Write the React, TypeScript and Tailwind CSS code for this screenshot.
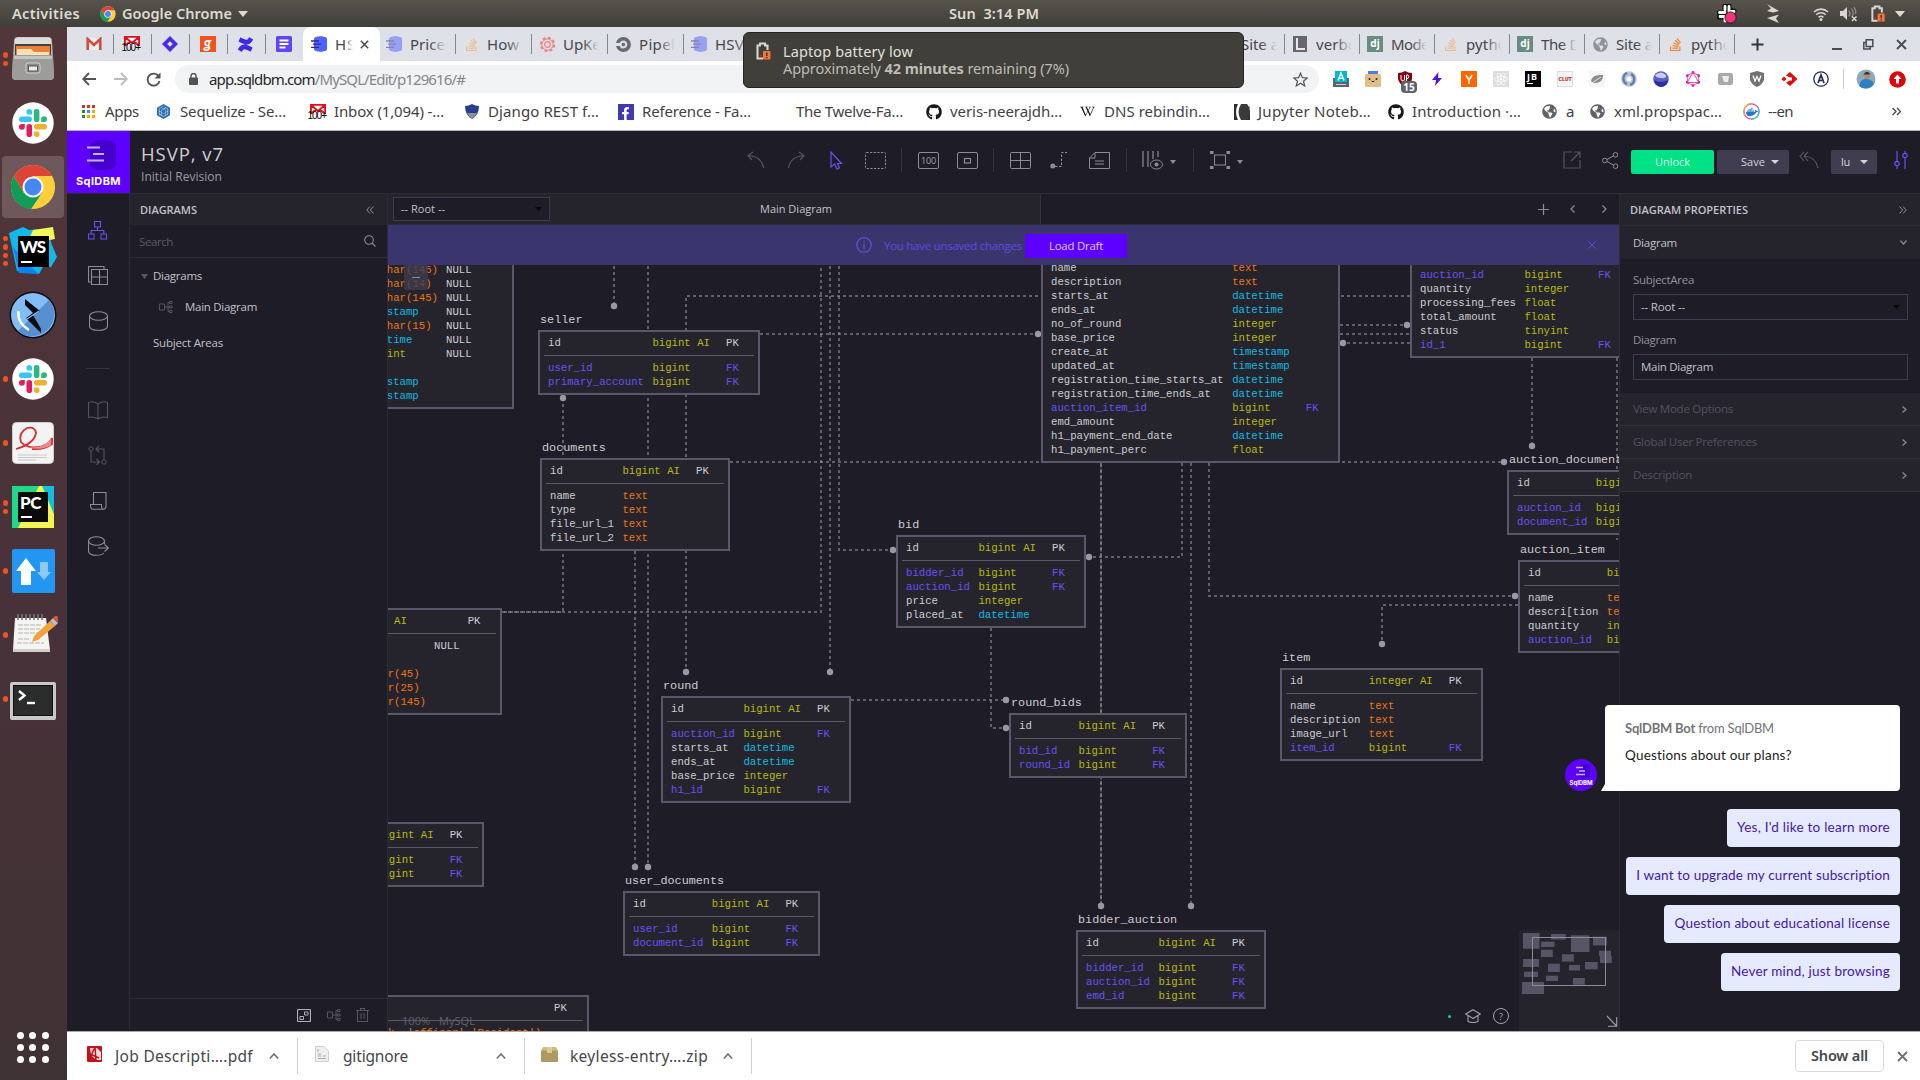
import React, { useLayoutEffect, useRef } from "react";
import { FaGithub, FaWikipediaW, FaStackOverflow, FaConfluence, FaReact, FaDocker, FaFacebookF, FaGlobeAmericas } from "react-icons/fa";
import { SiGraphql, SiCircleci, SiSequelize } from "react-icons/si";

const UI = "font-['Open_Sans','Noto_Sans',sans-serif]";
const SYS = "font-['Noto_Sans','Open_Sans',sans-serif]";

/* Text spaced out so that it fills exactly the width it is given. */
function Fit({ w, className = "", children }: { w: number; className?: string; children: React.ReactNode }) {
  const ref = useRef<HTMLSpanElement>(null);
  useLayoutEffect(() => {
    const el = ref.current;
    if (!el) return;
    el.style.letterSpacing = "0px";
    const n = (el.textContent || "").length;
    el.style.letterSpacing = `${(w - el.getBoundingClientRect().width) / n}px`;
  });
  return (
    <span ref={ref} className={`inline-block shrink-0 whitespace-pre ${className}`}>
      {children}
    </span>
  );
}

type SvgProps = { w: number; h: number; className?: string; children: React.ReactNode; vb?: string };
const Svg = ({ w, h, className = "", children, vb }: SvgProps) => (
  <svg width={w} height={h} viewBox={vb || `0 0 ${w} ${h}`} fill="none" className={`shrink-0 ${className}`}>
    {children}
  </svg>
);

/* ---------- logos ---------- */

const Chrome = ({ s }: { s: number }) => (
  <Svg w={s} h={s} vb="0 0 48 48">
    <circle cx="24" cy="24" r="23" fill="#fdd03b" />
    <path d="M4.1 12.5 A23 23 0 0 0 22 47 L33.5 30 L24 24 L14.5 30.5 Z" fill="#119c58" />
    <path d="M24 12.5 H43.9 A23 23 0 0 0 4.1 12.5 L14 29.5 Z" fill="#dd4437" />
    <circle cx="24" cy="24" r="11" fill="#f4f4f4" />
    <circle cx="24" cy="24" r="8.8" fill="#4587f3" />
  </Svg>
);

const Slack = ({ s }: { s: number }) => (
  <Svg w={s} h={s} vb="0 0 42 42">
    <circle cx="21" cy="21" r="20.7" fill="#fff" />
    <rect x="7" y="14.5" width="13" height="5.6" rx="2.8" fill="#36c5f0" />
    <path d="M20 12.6 h-3 a2.8 2.8 0 1 1 3 -2.8 z" fill="#36c5f0" />
    <rect x="21.8" y="7" width="5.6" height="13" rx="2.8" fill="#2eb67d" />
    <path d="M29.2 20 v-3 a2.9 2.9 0 1 1 2.8 3 z" fill="#2eb67d" />
    <rect x="22" y="22" width="13" height="5.6" rx="2.8" fill="#ecb22e" />
    <path d="M22 29.4 h3 a2.8 2.8 0 1 1 -3 2.8 z" fill="#ecb22e" />
    <rect x="14.5" y="22" width="5.6" height="13" rx="2.8" fill="#e01e5a" />
    <path d="M12.8 22 v3 a2.9 2.9 0 1 1 -2.8 -3 z" fill="#e01e5a" />
  </Svg>
);

const Gmail = () => (
  <Svg w={16} h={14}>
    <rect x="1" y="1" width="14" height="12" fill="#eee" />
    <path d="M1.7 13 V2 L8 8 L14.3 2 V13" stroke="#d54b3d" strokeWidth="2.6" />
  </Svg>
);
const Gmail100 = () => (
  <div className="relative h-4 w-4">
    <Svg w={16} h={10}>
      <rect width="16" height="10" fill="#fff" />
      <path d="M0.9 10 V0.9 H15.1 V10 M1 1 L8 7 L15 1 M1.5 9.5 L6 5.5 M14.5 9.5 L10 5.5" stroke="#e00f1b" strokeWidth="1.9" />
    </Svg>
    <span className="absolute -left-[2px] top-[7px] font-['Liberation_Sans'] text-[10px] leading-[10px] tracking-[-1px] text-black">100+</span>
  </div>
);
const Db = ({ faded = false }: { faded?: boolean }) => (
  <Svg w={16} h={16} className={faded ? "opacity-50" : ""}>
    <path d="M3 3 C3 -0.6 16 -0.6 16 3 V13 C16 16.6 3 16.6 3 13 Z" fill="#4f62fb" />
    <path d="M0 5 h8 M2 8.2 h8 M0 11.4 h8" stroke="#2e2a8c" strokeWidth="1.3" />
  </Svg>
);
const Dj = () => (
  <div className="flex h-4 w-4 items-center justify-center bg-[#678c80] pb-0.5 font-['Noto_Sans'] text-[10px] font-bold leading-none text-white">dj</div>
);
const Globe = ({ c = "#5f6368" }: { c?: string }) => <FaGlobeAmericas size={15} color={c} className="shrink-0" />;

const favicons: Record<string, React.ReactNode> = {
  gmail: <Gmail />,
  gmail100: <Gmail100 />,
  jira: (
    <Svg w={16} h={16}>
      <path d="M8 0 L16 8 L8 16 L0 8 Z" fill="#4b2be8" />
      <path d="M8 5.2 L10.8 8 L8 10.8 L5.2 8 Z" fill="#dfe1e8" />
    </Svg>
  ),
  g: <div className="flex h-4 w-4 items-center justify-center bg-[#f4511e] pb-1 font-['Lato'] text-[15px] font-black italic leading-none text-white">g</div>,
  confluence: <FaConfluence size={15} color="#4326e6" />,
  docs: (
    <Svg w={16} h={16}>
      <rect width="16" height="16" rx="1.5" fill="#6246f5" />
      <path d="M3.5 4.5 h9 M3.5 8 h9 M3.5 11.5 h6" stroke="#fff" strokeWidth="1.8" />
    </Svg>
  ),
  dbf: <Db faded />,
  so: <FaStackOverflow size={15} color="#f48024" />,
  sof: <FaStackOverflow size={15} color="#f0b98c" />,
  gear: (
    <Svg w={17} h={17}>
      <circle cx="8.5" cy="8.5" r="6.6" stroke="#f08080" strokeWidth="2.2" strokeDasharray="3 2.2" />
      <circle cx="8.5" cy="8.5" r="5.6" stroke="#f08080" strokeWidth="1" />
      <circle cx="8.5" cy="8.5" r="2.8" stroke="#f08080" strokeWidth="1.2" />
    </Svg>
  ),
  circle: <SiCircleci size={15} color="#6b6b6e" />,
  l: (
    <Svg w={14} h={16}>
      <rect width="14" height="16" fill="#67666c" />
      <path d="M4 2 V13 H12" stroke="#e8e8ea" strokeWidth="2" />
    </Svg>
  ),
  dj: <Dj />,
  globe: <Globe c="#909299" />,
};

/* ---------- desktop bar and dock ---------- */

const Battery = ({ s = 1 }: { s?: number }) => (
  <Svg w={17 * s} h={18 * s} vb="0 0 17 18">
    <path d="M8 16.500 H2.500 V3.500 H5 V1.500 H10 V3.500 H12.500 V8" stroke="#d8d6cf" strokeWidth="2.100" />
    <rect x="8" y="9" width="7.500" height="8.500" rx="1" fill="#f0763b" />
    <path d="M11.800 10.500 V14 M11.800 15 V16.300" stroke="#503020" strokeWidth="1.500" />
    <circle cx="5.800" cy="13.500" r="1" fill="#e02020" />
  </Svg>
);

function TopBar() {
  return (
    <div className={`flex h-[27px] w-full shrink-0 items-center bg-gradient-to-b from-[#57544b] to-[#3f3e39] text-[14.5px] font-semibold text-[#dfdbd2] ${SYS}`}>
      <Fit w={68} className="ml-3">Activities</Fit>
      <div className="ml-5 flex w-5 items-center"><Chrome s={16} /></div>
      <Fit w={110} className="ml-[2px]">Google Chrome</Fit>
      <Svg w={10} h={6} className="ml-1.5"><path d="M0 0 H10 L5 6 Z" fill="#dfdbd2" /></Svg>
      <Fit w={90} className="ml-[701px]">Sun  3:14 PM</Fit>
      <div className="ml-auto flex w-[203px] items-center">
        <div className="h-5 w-5">
          <Svg w={20} h={20}>
            <path d="M2 9 H9 M2 13 H8 M8 2 V7 M12 2 V9 M12 7 H17" stroke="#111" strokeWidth="5" strokeLinecap="round" />
            <path d="M2.500 8.500 H8 M3 12.500 H7 M8 2.500 V6 M12 2.500 V8.500 M14.500 7.500 H17 M8 13 V17" stroke="#fff" strokeWidth="2.8" strokeLinecap="round" />
            <circle cx="13.5" cy="13.5" r="5.6" fill="#f5337d" stroke="#111" strokeWidth="0.800" />
          </Svg>
        </div>
        <Svg w={14} h={20} className="ml-[29px]"><path d="M1 0 L13 7 L7 8.5 L1 7 L5 4.5 Z M1 14 L13 10.5 L10 14.5 L13 19 Z" fill="#d8d6cf" /></Svg>
        <Svg w={16} h={14} className="ml-[33px]">
          <path d="M1 5 A10 10 0 0 1 15 5 M3.3 7.8 A6.5 6.5 0 0 1 12.7 7.8 M5.6 10.4 A3.4 3.4 0 0 1 10.4 10.4" stroke="#d8d6cf" strokeWidth="1.6" />
          <circle cx="8" cy="12.4" r="1.5" fill="#d8d6cf" />
        </Svg>
        <Svg w={18} h={16} className="ml-[11px]">
          <path d="M0 5 H3 L7 1 V14 L3 10 H0 Z" fill="#d8d6cf" />
          <path d="M9 4.5 Q11 7.5 9 10.5 M11.5 2.5 Q14.5 7 12 11 M14 1 Q16.5 5 15.5 8" stroke="#8f8d86" strokeWidth="1.3" />
          <path d="M12 10.5 L16.5 15 M16.5 10.5 L12 15" stroke="#d8d6cf" strokeWidth="1.5" />
        </Svg>
        <div className="ml-[12px]"><Battery s={0.95} /></div>
        <Svg w={10} h={6} className="ml-[9px]"><path d="M0 0 H10 L5 6 Z" fill="#dfdbd2" /></Svg>
      </div>
    </div>
  );
}

const dockItems: { dots: number; active?: boolean; icon: React.ReactNode }[] = [
  {
    dots: 2,
    icon: (
      <Svg w={44} h={46}>
        <path d="M3 5 Q3 1 7 1 H37 Q41 1 41 5 L43 40 Q43 44 39 44 H5 Q1 44 1 40 Z" fill="#b9b9b7" />
        <path d="M4 4 Q4 1.5 7 1.5 H37 Q40 1.5 40 4 V9 H4 Z" fill="#dcdcda" />
        <rect x="4" y="8" width="36" height="12" fill="#4b4038" />
        <path d="M5 10 H39 V20 H5 Z" fill="#e8823a" />
        <path d="M6 13 H20 L23 16 H38 V20 H6 Z" fill="#f7e2b8" />
        <path d="M2 19 H42 L43 41 Q42 44 39 44 H5 Q2 44 1 41 Z" fill="#9c9c9a" />
        <path d="M3 20 H41 V23 H3 Z" fill="#c4c4c2" />
        <rect x="15" y="27" width="14" height="10" rx="2" fill="#8a8a88" stroke="#d2d2d0" />
        <rect x="17.5" y="30" width="9" height="5" fill="#ececec" stroke="#555" />
      </Svg>
    ),
  },
  { dots: 0, icon: <Slack s={42} /> },
  { dots: 1, active: true, icon: <Chrome s={46} /> },
  {
    dots: 4,
    icon: (
      <div className="relative h-12 w-12">
        <Svg w={48} h={48}>
          <path d="M0 6 L14 0 L20 3 L34 2 L40 8 L43 18 L48 30 L42 40 L34 40 L30 47 L8 44 Z" fill="#11b8ea" />
          <path d="M24 3 L44 0 L46 12 L36 14 L20 12 Z" fill="#f4f65a" />
          <path d="M4 20 L10 46 L30 47 L22 40 Z" fill="#0a84f5" />
        </Svg>
        <div className="absolute left-[9px] top-[9px] flex h-[31px] w-[31px] flex-col bg-black">
          <span className="pl-[2px] pt-[2px] font-['Lato'] text-[17px] font-black leading-[18px] tracking-[-1px] text-white">WS</span>
          <div className="ml-[3px] mt-[5px] h-[2px] w-[11px] bg-white" />
        </div>
      </div>
    ),
  },
  {
    dots: 0,
    icon: (
      <Svg w={48} h={48}>
        <circle cx="24" cy="24" r="23.5" fill="#0c0c10" />
        <circle cx="24" cy="24" r="22" fill="#82bdf8" />
        <path d="M40 9 A22 22 0 0 1 9 40 Z" fill="#5690d0" />
        <path d="M16 8 L31 20 L24 24 L32 38 V42 L17 27 L24 22 L16 14 Z" fill="#0c0c10" />
        <path d="M18 28 L30 20" stroke="#82bdf8" strokeWidth="1.2" />
        <path d="M9.5 20 Q8 32 20 39" stroke="#fff" strokeWidth="2.4" />
      </Svg>
    ),
  },
  { dots: 1, icon: <Slack s={42} /> },
  {
    dots: 1,
    icon: (
      <Svg w={42} h={42}>
        <rect x="0.5" y="0.5" width="41" height="41" rx="4" fill="#f3f3f3" stroke="#cfcfcf" />
        <path d="M4 27 Q22 22 24 11 Q23 4 15 6 Q6 11 9 20 Q15 27 28 25 Q38 22 40 16 V22 Q32 28 20 27" stroke="#d52f33" strokeWidth="1.8" />
        <path d="M16 25.5 Q34 26 39 16 V23 Q30 29 16 25.5 Z" fill="#f08a88" />
        <path d="M6 33 H35 M6 35.5 H35 M6 38 H24" stroke="#c9c9c9" />
      </Svg>
    ),
  },
  {
    dots: 2,
    icon: (
      <div className="relative h-[42px] w-[42px]">
        <Svg w={42} h={42}>
          <rect width="42" height="42" fill="#21d789" />
          <path d="M0 42 L12 34 L24 0 H30 L42 28 V42 Z" fill="#f5f550" />
          <path d="M0 0 H27 L6 42 H0 Z" fill="#21d789" />
          <path d="M31 0 H42 V28 Z" fill="#12bfe0" />
        </Svg>
        <div className="absolute left-[6px] top-[6px] flex h-[30px] w-[30px] flex-col bg-[#0b0b0b]">
          <span className="pl-[2px] pt-[2px] font-['Lato'] text-[17px] font-black leading-[17px] tracking-[-0.5px] text-white">PC</span>
          <div className="ml-[3px] mt-[5px] h-[2px] w-[11px] bg-white" />
        </div>
      </div>
    ),
  },
  {
    dots: 1,
    icon: (
      <Svg w={43} h={44}>
        <rect width="43" height="44" rx="2" fill="#2196f3" />
        <path d="M14 9 L24 22 H19 V36 H9 V22 H4 Z" fill="#fff" />
        <path d="M32 31 L25 23 H28 V13 H36 V23 H39 Z" fill="#8fc8f9" />
      </Svg>
    ),
  },
  {
    dots: 1,
    icon: (
      <Svg w={46} h={40} className="-mt-1 ml-1">
        <path d="M3 5 H34 L38 37 H1 Z" fill="#f4f4f2" />
        <path d="M1 36 H38 V39 H1 Z" fill="#cfcfcc" />
        <path d="M6 1 V7 M10 1 V7 M14 1 V7 M18 1 V7 M22 1 V7 M26 1 V7 M30 1 V7" stroke="#777" strokeWidth="1.6" />
        <path d="M6 12 H30 M6 16 H28 M6 20 H26 M6 26 H18 M5 30 H32" stroke="#b4b4b4" strokeDasharray="5 1" />
        <path d="M20 29 L22 23 L38 8 L43 13 L26 27 Z" fill="#f2a23c" />
        <path d="M38 8 L41 5 L46 10 L43 13 Z" fill="#bcbcbc" />
        <path d="M41 5 Q44 1 46 4 V9 Z" fill="#e34c4c" />
      </Svg>
    ),
  },
  {
    dots: 1,
    icon: (
      <Svg w={46} h={38} className="mt-1">
        <rect width="46" height="38" rx="2" fill="#c9c9c7" />
        <rect x="3.500" y="3.500" width="39" height="30" fill="#2b2d2c" stroke="#111" />
        <path d="M9 9 L14.5 13.5 L9 18" stroke="#fff" strokeWidth="2.4" />
        <path d="M17 21 H25" stroke="#fff" strokeWidth="2.4" />
      </Svg>
    ),
  },
];

function Dock() {
  return (
    <div className="flex w-[67px] shrink-0 flex-col bg-gradient-to-b from-[#523639] via-[#49323a] to-[#3f3234]">
      {dockItems.map((d, i) => (
        <div key={i} className="flex h-16 items-center">
          <div className="flex w-[11px] shrink-0 flex-col items-center gap-[3px]">
            {Array.from({ length: d.dots }, (_, k) => (
              <div key={k} className="h-[5.4px] w-[5.4px] rounded-full bg-[#e95420]" />
            ))}
          </div>
          <div className={`-ml-[9px] flex h-[62px] w-[62px] items-center justify-center rounded ${d.active ? "bg-[#6f585c]" : ""}`}>{d.icon}</div>
        </div>
      ))}
      <div className="mb-[17px] ml-[17px] mt-auto grid w-8 grid-cols-3 gap-x-[5px] gap-y-[5px]">
        {Array.from({ length: 9 }, (_, k) => (
          <div key={k} className="h-[7px] w-[7px] rounded-full bg-white" />
        ))}
      </div>
    </div>
  );
}

/* ---------- browser chrome ---------- */

function Tab({ icon, label, w, lw, sep = true }: { icon: string; label: string; w: number; lw: number; sep?: boolean }) {
  return (
    <div className="flex h-full shrink-0 items-center" style={{ width: w }}>
      <div className={`h-5 w-px ${sep ? "bg-[#85878d]" : ""}`} />
      <div className="ml-[6px] flex w-[18px] shrink-0 justify-center">{favicons[icon]}</div>
      <div className="relative ml-[7px] w-[36px] overflow-hidden text-[15px] text-[#45474b]">
        <Fit w={lw}>{label}</Fit>
        <div className="absolute right-0 top-0 h-full w-4 bg-gradient-to-r from-transparent to-[#dfe1e8]" />
      </div>
    </div>
  );
}

function TabStrip() {
  return (
    <div className={`flex h-[34px] items-center bg-[#dfe1e8] pl-2 ${SYS}`}>
      {["gmail", "gmail100", "jira", "g", "confluence", "docs"].map((f, i) => (
        <div key={f} className="flex h-full w-[38px] shrink-0 items-center">
          <div className={`h-5 w-px ${i ? "bg-[#85878d]" : ""}`} />
          <div className="flex w-[35px] justify-center">{favicons[f]}</div>
        </div>
      ))}
      <div className="flex h-full w-[77px] shrink-0 items-center rounded-t-lg bg-white pl-2">
        <Db />
        <div className="relative ml-2 w-[18px] overflow-hidden text-[15px] text-[#45474b]">
          <Fit w={21}>HS</Fit>
          <div className="absolute right-0 top-0 h-full w-2 bg-gradient-to-r from-transparent to-white" />
        </div>
        <Svg w={9} h={9} className="ml-[7px]"><path d="M0.8 0.8 L8.2 8.2 M8.2 0.8 L0.8 8.2" stroke="#4a4c50" strokeWidth="1.5" /></Svg>
      </div>
      <div className="-ml-[2px] mr-[2px] flex h-full"><Tab icon="dbf" label="Price" w={75} lw={35} sep={false} /></div>
      <Tab icon="sof" label="How t" w={76} lw={42} />
      <Tab icon="gear" label="UpKee" w={76} lw={46} />
      <Tab icon="circle" label="Pipelin" w={76} lw={50} />
      <Tab icon="dbf" label="HSV" w={76} lw={29} />
      <div className="flex-1" />
      <Tab icon="globe" label="Site a" w={75} lw={38} sep={false} />
      <Tab icon="l" label="verbo" w={75} lw={41} />
      <Tab icon="dj" label="Mode" w={75} lw={38} />
      <Tab icon="sof" label="pytho" w={75} lw={41} />
      <Tab icon="dj" label="The D" w={75} lw={39} />
      <Tab icon="globe" label="Site a" w={75} lw={37} />
      <Tab icon="so" label="pytho" w={75} lw={41} />
      <div className="flex w-[186px] shrink-0 items-center">
        <div className="h-5 w-px bg-[#85878d]" />
        <Svg w={13} h={13} className="ml-4"><path d="M6.5 0.5 V12.5 M0.5 6.5 H12.5" stroke="#35373b" strokeWidth="2" /></Svg>
        <div className="ml-[68px] mt-[9px] h-[2px] w-[10px] bg-[#4a4c50]" />
        <Svg w={11} h={11} className="ml-[21px]"><path d="M3.2 0.8 H9.8 V7.4 H3.2 Z M3 3.5 H0.8 V10 H7.2 V8" stroke="#4a4c50" strokeWidth="1.5" /></Svg>
        <Svg w={11} h={11} className="ml-[22px]"><path d="M1 1 L10 10 M10 1 L1 10" stroke="#4a4c50" strokeWidth="1.9" /></Svg>
      </div>
    </div>
  );
}

const extensions: React.ReactNode[] = [
  <Svg w={16} h={16}><path d="M0 7 H16 V16 H0 Z" fill="#5b6569" /><rect x="2" width="12" height="11" fill="#00b8d4" /><path d="M5 9.500 L8 2 L11 9.500 M6.2 7.200 H9.8" stroke="#fff" strokeWidth="1.4" /><path d="M3 13.5 H13" stroke="#cfd4d6" /></Svg>,
  <Svg w={16} h={16}><rect x="3" width="10" height="5" fill="#4b7bec" /><rect y="3" width="16" height="13" rx="1.5" fill="#e3bd83" /><circle cx="4.5" cy="8" r="1" fill="#222" /><circle cx="11.5" cy="8" r="1" fill="#222" /><path d="M6.5 10 Q8 11.5 9.5 10" stroke="#222" /></Svg>,
  <div className="relative h-4 w-4">
    <Svg w={16} h={16}><path d="M8 0 Q11 2 15 2 V8 Q14 13 8 16 Q2 13 1 8 V2 Q5 2 8 0 Z" fill="#800610" /><path d="M4 4 V8 Q4 10 6 10 Q7.500 10 7.500 8 V4 M9.500 10 V4 H11 Q12.500 5.500 11 7.500 H9.500" stroke="#fff" /></Svg>
    <span className="absolute left-[4px] top-[10px] flex h-3 w-4 items-center justify-center rounded-sm bg-[#5f6368] font-['Noto_Sans'] text-[10px] font-bold leading-none text-white">15</span>
  </div>,
  <Svg w={12} h={14}><path d="M7.5 0 L1 8 H5 L4 14 L11 6 H7 Z" fill="#4b17e6" /></Svg>,
  <Svg w={16} h={16}><rect width="16" height="16" fill="#ff6600" /><path d="M4.800 4 L8 9 L11.200 4 M8 9 V13" stroke="#fff" strokeWidth="1.5" /></Svg>,
  <div className="flex h-4 w-4 items-center justify-center bg-[#dedede]"><FaReact size={14} color="#fff" /></div>,
  <div className="flex h-4 w-4 flex-col bg-black pl-[2px] pt-px"><Fit w={11} className="self-start font-['Noto_Sans'] text-[9px] font-bold leading-[9px] text-white">JB</Fit><div className="mt-[2px] h-px w-[6px] bg-white" /></div>,
  <div className="flex h-4 w-4 items-center justify-center border border-[#ddd] bg-[#f4f4f4] font-['Liberation_Mono'] text-[6px] font-bold text-[#b22]"><Fit w={13}>CLUT</Fit></div>,
  <Svg w={16} h={16}><rect width="16" height="16" fill="#f6f6f6" /><path d="M2 10 Q3 3 14 4 Q14 12 6 12 Q3 12 2 10 Z" fill="#8b8b8b" /><path d="M3 12 L12 6" stroke="#e8e8e8" /></Svg>,
  <Svg w={16} h={16}><circle cx="8" cy="8" r="7.800" fill="#b4c4dd" /><path d="M6 2 A6 6 0 0 0 6 13 M10 3 A6 6 0 0 1 9 14" stroke="#5d7cab" strokeWidth="2.200" /><circle cx="8" cy="8" r="2.500" fill="#fff" /></Svg>,
  <Svg w={16} h={16}><circle cx="8" cy="8" r="7.800" fill="#5561c9" /><path d="M2 4 Q8 -1 13 4 Q14 8 8 7 Q3 7 2 4 Z" fill="#c9cdf5" /><path d="M1 9 Q8 13 15 9 Q14 16 8 16 Q2 15 1 9 Z" fill="#2c2f97" /></Svg>,
  <SiGraphql size={16} color="#e6199b" />,
  <Svg w={15} h={12}><rect width="15" height="12" rx="2" fill="#a9a9a9" /><path d="M4 3 H11 L10 9 H6 Z" fill="#ececec" /></Svg>,
  <Svg w={16} h={16}><path d="M8 0 L15 2 V9 Q13 14 8 16 Q3 14 1 9 V2 Z" fill="#717171" /><path d="M4 4.500 L6 10 L8 5.500 L10 10 L12 4.500" stroke="#fff" strokeWidth="1.300" /></Svg>,
  <Svg w={17} h={16}><path d="M9 1 L16.500 8 L9 15 L5 11.500 L9 9.500 H11 V6.500 H9 L5 4.500 Z" fill="#e10b0b" /><path d="M3 5.500 L5.500 8 L3 10.500 L0.500 8 Z" fill="#e10b0b" /></Svg>,
  <Svg w={16} h={16}><circle cx="8" cy="8" r="7.200" stroke="#22294f" strokeWidth="1.300" /><path d="M5 12 L8 4 L11 12 M6.500 9.500 H9" stroke="#22294f" strokeWidth="1.700" /></Svg>,
];

function Toolbar() {
  return (
    <div className="flex h-9 items-center bg-white pl-[15px]">
      <Svg w={14} h={14}><path d="M14 7 H1.500 M7 1 L1.200 7 L7 13" stroke="#505358" strokeWidth="1.800" /></Svg>
      <Svg w={14} h={14} className="ml-[18px]"><path d="M0 7 H12.500 M7 1 L12.800 7 L7 13" stroke="#babcbe" strokeWidth="1.800" /></Svg>
      <Svg w={15} h={15} className="ml-[18px]"><path d="M12.800 4.500 A6 6 0 1 0 13.500 9" stroke="#505358" strokeWidth="1.900" /><path d="M14.500 0.500 V6.500 H8.500 Z" fill="#505358" /></Svg>
      <div className={`ml-[14px] flex h-7 w-[1144px] shrink-0 items-center rounded-full bg-[#f1f3f4] ${SYS}`}>
        <Svg w={9} h={12} className="ml-[14px]"><rect y="4.500" width="9" height="7.500" rx="1" fill="#505358" /><path d="M2 5 V3 A2.500 2.500 0 0 1 7 3 V5" stroke="#505358" strokeWidth="1.400" /></Svg>
        <Fit w={256} className="ml-[11px] mt-px text-[15px] text-[#26282c]">app.sqldbm.com<span className="text-[#85878b]">/MySQL/Edit/p129616/#</span></Fit>
        <Svg w={15} h={15} className="ml-auto mr-[11px]"><path d="M7.500 1.200 L9.400 5.700 L14.200 6 L10.500 9.200 L11.700 13.900 L7.500 11.300 L3.300 13.900 L4.500 9.200 L0.800 6 L5.600 5.700 Z" stroke="#505358" strokeWidth="1.200" /></Svg>
      </div>
      <div className="ml-[6px] flex items-center">
        {extensions.map((e, i) => (
          <div key={i} className="flex w-8 shrink-0 items-center justify-center">{e}</div>
        ))}
      </div>
      <div className="ml-[6px] h-5 w-px bg-[#c8cacd]" />
      <Svg w={20} h={20} className="ml-[12px]"><circle cx="10" cy="10" r="9.500" fill="#8fa9b8" /><path d="M3 17 Q5 9 10 10 Q16 10 18 15 A10 10 0 0 1 3 17 Z" fill="#2f7fc6" /><circle cx="11" cy="6.500" r="3.300" fill="#b98a70" /><path d="M7.500 5.500 Q11 0 14.500 5.500 Z" fill="#33302e" /></Svg>
      <Svg w={17} h={17} className="ml-[13px]"><circle cx="8.500" cy="8.500" r="8.300" fill="#d90707" /><path d="M8.500 3.500 L12.500 8 H10 V12.500 H7 V8 H4.500 Z" fill="#fff" /></Svg>
    </div>
  );
}

const bookmarks: { icon: React.ReactNode; w: number; label: string; lw: number }[] = [
  {
    icon: (
      <Svg w={14} h={14}>
        {["#d93025", "#d93025", "#d93025", "#1e8e3e", "#4285f4", "#f9ab00", "#1e8e3e", "#f9ab00", "#f9ab00"].map((c, i) => (
          <rect key={i} x={(i % 3) * 5} y={Math.floor(i / 3) * 5} width="3" height="3" fill={c} />
        ))}
      </Svg>
    ),
    w: 75, label: "Apps", lw: 34,
  },
  { icon: <SiSequelize size={15} color="#2b6cb5" />, w: 154, label: "Sequelize - Se…", lw: 106 },
  { icon: <Gmail100 />, w: 154, label: "Inbox (1,094) -…", lw: 110 },
  { icon: <Svg w={14} h={15}><path d="M7 0 Q10 2 14 2 Q14 11 7 15 Q0 11 0 2 Q4 2 7 0 Z" fill="#263e8f" /><path d="M2 9 L12 9 Q10 13 7 15 Q4 13 2 9 Z" fill="#8c9095" /></Svg>, w: 154, label: "Django REST f…", lw: 111 },
  { icon: <div className="flex h-4 w-4 items-end justify-center bg-[#4338b4]"><FaFacebookF size={13} color="#fff" /></div>, w: 154, label: "Reference - Fa…", lw: 109 },
  { icon: null, w: 154, label: "The Twelve-Fa…", lw: 107 },
  { icon: <FaGithub size={16} color="#191717" />, w: 154, label: "veris-neerajdh…", lw: 112 },
  { icon: <FaWikipediaW size={15} color="#111" />, w: 154, label: "DNS rebindin…", lw: 106 },
  { icon: <Svg w={16} h={16}><path d="M0 0 H4 Q0 8 4 16 H0 Z M16 0 V16 H12 Q16 12 15 8 Z" fill="#2d2d2d" /><path d="M7 0 H13 L15 3 V13 L13 16 H7 Q2 8 7 0 Z" fill="#3a3a3a" /></Svg>, w: 154, label: "Jupyter Noteb…", lw: 113 },
  { icon: <FaGithub size={16} color="#191717" />, w: 154, label: "Introduction ·…", lw: 109 },
  { icon: <Globe />, w: 48, label: "a", lw: 8 },
  { icon: <Globe />, w: 154, label: "xml.propspac…", lw: 108 },
  {
    icon: (
      <div className="relative flex h-[17px] w-[17px] items-center justify-center">
        <Svg w={17} h={17}><circle cx="8.500" cy="8.500" r="7.600" stroke="#d64fae" strokeWidth="1.300" /><path d="M8.500 0.900 A7.600 7.600 0 0 0 2 12.500" stroke="#f2a53a" strokeWidth="1.300" /><path d="M8.500 16.100 A7.600 7.600 0 0 0 15.500 6" stroke="#3bc4e8" strokeWidth="1.300" /></Svg>
        <div className="absolute inset-0 flex items-center justify-center"><FaDocker size={12} color="#2577d0" /></div>
      </div>
    ),
    w: 120, label: "--en", lw: 25,
  },
];

function Bookmarks() {
  return (
    <div className={`flex h-[34px] items-center border-b border-[#b3b4b6] bg-white pb-[4px] pl-[13px] text-[15px] text-[#3f4145] ${SYS}`}>
      {bookmarks.map((b, i) => (
        <div key={i} className="flex shrink-0 items-center" style={{ width: b.w }}>
          <div className="mr-2 flex w-[17px] shrink-0 justify-center">{b.icon}</div>
          <Fit w={b.lw}>{b.label}</Fit>
        </div>
      ))}
      <Svg w={9} h={9} className="ml-auto mr-[19px]"><path d="M0.500 1 L4 4.500 L0.500 8 M5 1 L8.500 4.500 L5 8" stroke="#45474b" strokeWidth="1.300" /></Svg>
    </div>
  );
}

function Notification() {
  return (
    <div className={`absolute left-[743px] top-8 flex h-14 w-[501px] rounded-[6px] border border-[#25241f] bg-[#403f39] ${SYS}`}>
      <div className="ml-[11px] mt-[9px]"><Battery /></div>
      <div className="ml-[11px] mt-[10px] flex flex-col text-[14.500px] leading-[17px] text-[#e2e0da]">
        <Fit w={130} className="self-start">Laptop battery low</Fit>
        <Fit w={286} className="self-start text-[#bebcb5]">Approximately <b className="font-bold">42 minutes</b> remaining (7%)</Fit>
      </div>
    </div>
  );
}

/* ---------- application header ---------- */

const G = "#8d8b97";
const D = "#565363";
const P = "#6a50f2";

const Sep = ({ className = "" }: { className?: string }) => <div className={`h-6 w-px shrink-0 bg-[#353341] ${className}`} />;
const Cell = ({ w, children }: { w: number; children: React.ReactNode }) => (
  <div className="flex shrink-0 items-center justify-center" style={{ width: w }}>{children}</div>
);
const Caret = ({ c = "#d5d4da", w = 8 }: { c?: string; w?: number }) => (
  <Svg w={w} h={4}><path d={`M0 0 H${w} L${w / 2} 4 Z`} fill={c} /></Svg>
);

function AppHeader() {
  return (
    <div className="flex h-[63px] shrink-0 border-b border-[#2d2b36]">
      <div className="flex w-[63px] shrink-0 flex-col items-center bg-[#5e00ff]">
        <Svg w={34} h={30} className="mt-[9px]">
          <path d="M8 6 Q8 0 21 0 Q34 0 34 6 V24 Q34 30 21 30 Q8 30 8 24 Z" fill="#4600ce" />
          <path d="M5 7.500 H18 M11 14 H22 M5 20.500 H22" stroke="#c4b4ff" strokeWidth="1.800" />
        </Svg>
        <Fit w={45} className="mt-[3px] font-['Inter'] text-[11px] font-bold leading-4 text-white">SqlDBM</Fit>
      </div>
      <div className={`ml-[11px] flex w-[595px] flex-col ${UI}`}>
        <Fit w={83} className="mt-[9px] self-start text-[18.500px] leading-[27px] text-[#cfced4]">HSVP, v7</Fit>
        <Fit w={81} className="mt-[2px] self-start text-[12px] leading-[15px] text-[#9b99a4]">Initial Revision</Fit>
      </div>
      <div className="flex h-[58px] items-center">
        <Cell w={40}><Svg w={18} h={18}><path d="M6 1 L1 4.500 L5 9 M1.500 4.500 Q15 6 16.500 17" stroke={D} strokeWidth="1.200" /></Svg></Cell>
        <Cell w={40}><Svg w={18} h={18}><path d="M12 1 L17 4.500 L13 9 M16.500 4.500 Q3 6 1.500 17" stroke={D} strokeWidth="1.200" /></Svg></Cell>
        <Cell w={39}><Svg w={14} h={19}><path d="M2 1 V16 L5.500 13 L8 18 L10.500 17 L8.500 12.500 L12.500 12.500 Z" stroke={P} strokeWidth="1.200" /></Svg></Cell>
        <Cell w={40}><Svg w={21} h={17}><rect x="0.500" y="0.500" width="20" height="16" rx="1" stroke={G} strokeDasharray="2.200 1.400" /></Svg></Cell>
        <Sep className="ml-[6px]" />
        <Cell w={53}>
          <div className={`flex h-[17px] w-[21px] items-center justify-center rounded-[2px] border border-[#8d8b97] text-[9px] leading-none text-[#a3a1ac] ${UI}`}><Fit w={15}>100</Fit></div>
        </Cell>
        <Cell w={24}><Svg w={21} h={17}><rect x="0.500" y="0.500" width="20" height="16" rx="1.500" stroke={G} /><rect x="7.500" y="6.500" width="6" height="4.500" stroke={G} strokeWidth="1.200" /></Svg></Cell>
        <Sep className="ml-[14px]" />
        <Cell w={52}><Svg w={21} h={17}><rect x="0.500" y="0.500" width="20" height="16" rx="1" stroke={G} /><path d="M10.500 0 V17 M0 8.500 H21" stroke={G} /></Svg></Cell>
        <Cell w={26}><Svg w={18} h={17}><circle cx="2.800" cy="14" r="2.500" fill={G} /><path d="M5 14.500 H11.500 V0.500 H17" stroke={G} strokeDasharray="2.500 1.500" /></Svg></Cell>
        <Cell w={54}><Svg w={21} h={17}><path d="M6 0.500 H20.500 V16.500 H0.500 V6 Z M6 0.500 V6 H0.500 M6 9 H15 M6 12 H15" stroke={G} /></Svg></Cell>
        <Sep />
        <Cell w={52}><Svg w={22} h={19}><path d="M1 0 V16 M6 0 V16 M11 0 V8 M16 0 V6" stroke={G} strokeWidth="1.200" /><ellipse cx="14.500" cy="13.500" rx="6" ry="4.500" stroke={G} /><circle cx="14.500" cy="13.500" r="2" fill={G} /></Svg></Cell>
        <div className="-ml-[9px] mt-[4px]"><Caret c={G} w={6} /></div>
        <Sep className="ml-[17px]" />
        <Cell w={52}><Svg w={20} h={18}><rect x="4.500" y="4" width="11" height="10" stroke={G} /><path d="M0 0 H3.500 V3 H0 Z M16.500 0 H20 V3 H16.500 Z M0 15 H3.500 V18 H0 Z M16.500 15 H20 V18 H16.500 Z" fill={G} /></Svg></Cell>
        <div className="-ml-[9px] mt-[4px]"><Caret c={G} w={6} /></div>
      </div>
      <div className={`ml-auto mr-[12px] flex h-[62px] items-center text-[11px] ${UI}`}>
        <Svg w={18} h={18} className="-mt-1 mr-[21px]"><path d="M9 1 H1 V17 H17 V9 M11 1 H17 V7 M17 1 L8 10" stroke={D} strokeWidth="1.200" /></Svg>
        <Svg w={17} h={17} className="-mt-1 mr-[12px]"><circle cx="2.800" cy="8.500" r="2.300" stroke={G} /><circle cx="13.500" cy="2.800" r="2.300" stroke={G} /><circle cx="13.500" cy="14.200" r="2.300" stroke={G} /><path d="M5 7.500 L11.300 4 M5 9.500 L11.300 13" stroke={G} /></Svg>
        <div className="flex h-6 w-[83px] items-center justify-center rounded-[2px] bg-[#00e285] text-[#d9fff0]"><Fit w={35}>Unlock</Fit></div>
        <div className="ml-[3px] flex h-6 w-[72px] items-center rounded-[2px] bg-[#403d51] pl-[24px] text-[#d5d4da]"><Fit w={24}>Save</Fit><div className="ml-[6px]"><Caret /></div></div>
        <Svg w={20} h={18} className="-mt-1 ml-[10px]"><path d="M5 1 L1 5 L5 10 M9 1 L5 5 L9 10 M5.500 5 Q17 6 19 17" stroke={D} strokeWidth="1.200" /></Svg>
        <div className="ml-[12px] flex h-6 w-[46px] items-center rounded-[2px] bg-[#403d51] pl-[10px] text-[#d5d4da]"><Fit w={9}>lu</Fit><div className="ml-[10px]"><Caret /></div></div>
        <Svg w={14} h={18} className="-mt-1 ml-[17px]"><path d="M3 0 V10 M3 15 V18 M11 0 V2 M11 7 V18" stroke={P} strokeWidth="1.200" /><circle cx="3" cy="12.500" r="2.200" stroke={P} strokeWidth="1.200" /><circle cx="11" cy="4.500" r="2.200" stroke={P} strokeWidth="1.200" /></Svg>
      </div>
    </div>
  );
}

/* ---------- left side ---------- */

const RailIcon = ({ h, children }: { h: number; children: React.ReactNode }) => (
  <div className="flex w-full shrink-0 items-center justify-center" style={{ height: h }}>{children}</div>
);

function Rail() {
  return (
    <div className="flex w-[63px] shrink-0 flex-col border-r border-[#2d2b36] pt-[13px]">
      <RailIcon h={46}><Svg w={20} h={19}><path d="M6.500 0.500 H12.500 V6 H6.500 Z M0.500 13 H6 V18 H0.500 Z M13 13 H18.500 V18 H13 Z M9.500 6 V9.500 M3.200 13 V9.500 H15.800 V13" stroke={P} strokeWidth="1.100" /></Svg></RailIcon>
      <RailIcon h={46}><Svg w={20} h={20}><path d="M3.500 3.500 H19.500 V18.500 H3.500 Z M11.500 3.500 V18.500 M3.500 11 H19.500 M3.500 16 H0.500 V0.500 H16 V3.500" stroke={G} strokeWidth="1.100" /></Svg></RailIcon>
      <RailIcon h={44}><Svg w={19} h={20}><ellipse cx="9.500" cy="5" rx="9" ry="4.200" stroke={G} strokeWidth="1.100" /><path d="M0.500 5 V15 Q1 19.300 9.500 19.300 Q18 19.300 18.500 15 V5" stroke={G} strokeWidth="1.100" /></Svg></RailIcon>
      <div className="mx-auto mt-[25px] h-px w-6 shrink-0 bg-[#353341]" />
      <div className="h-[18px] shrink-0" />
      <RailIcon h={46}><Svg w={20} h={19}><path d="M10 3 Q5 -0.500 0.500 1.500 V16.500 Q5 15 10 18 Q15 15 19.500 16.500 V1.500 Q15 -0.500 10 3 V18" stroke={D} strokeWidth="1.100" /></Svg></RailIcon>
      <RailIcon h={44}><Svg w={20} h={20}><circle cx="3" cy="4" r="2.200" stroke={D} /><circle cx="16" cy="17" r="2.200" stroke={D} /><path d="M3 6.500 V17 H11 M8.500 14 L11.500 17 L8.500 20 M16 14.500 V4 H8.500 M11 1 L8 4 L11 7" stroke={D} strokeWidth="1.100" /></Svg></RailIcon>
      <RailIcon h={48}><Svg w={17} h={18}><path d="M3.500 12.500 V0.500 H16 V14 Q16 17.200 13.500 17.200 H2.500 Q0.500 17.200 0.500 12.500 H11.500 Q11.500 17.200 13.500 17.200" stroke={G} strokeWidth="1.100" /></Svg></RailIcon>
      <RailIcon h={42}><Svg w={21} h={20}><ellipse cx="8.500" cy="5" rx="8" ry="4.200" stroke={G} strokeWidth="1.100" /><path d="M0.500 5 V15 Q1 19.300 8.500 19.300 Q14 19.300 16 17 M16.500 5 V8 M10 12 H20 M16.500 8.500 L20.500 12 L16.500 15.500" stroke={G} strokeWidth="1.100" /></Svg></RailIcon>
    </div>
  );
}

const Tree = ({ c }: { c: string }) => (
  <Svg w={14} h={12}><path d="M0.500 3 H5.500 V9 H0.500 Z M5.500 6 H9 M9 1.500 V10.500 M9 1.500 H10 M9 6 H10 M9 10.500 H10" stroke={c} /><path d="M10.500 0.500 H13 V2.500 H10.500 Z M10.500 5 H13 V7 H10.500 Z M10.500 9.500 H13 V11.500 H10.500 Z" stroke={c} /></Svg>
);

function DiagramsPanel() {
  return (
    <div className={`flex w-[258px] shrink-0 flex-col border-r border-[#2d2b36] text-[11.500px] text-[#c2c1c9] ${UI}`}>
      <div className="flex h-[31px] shrink-0 items-center bg-[#25242d] pl-[10px] pr-[13px]">
        <Fit w={57} className="mt-[2px] text-[11px] font-semibold">DIAGRAMS</Fit>
        <Svg w={8} h={8} className="ml-auto"><path d="M4 0.500 L0.800 4 L4 7.500 M7.500 0.500 L4.300 4 L7.500 7.500" stroke={G} /></Svg>
      </div>
      <div className="flex h-[33px] shrink-0 items-center border-b border-[#2d2b36] pl-[9px] pr-[11px]">
        <Fit w={34} className="mt-[2px] text-[#5b5868]">Search</Fit>
        <Svg w={12} h={12} className="-mt-px ml-auto"><circle cx="5" cy="5" r="4.300" stroke={G} strokeWidth="1.100" /><path d="M8 8 L11.500 11.500" stroke={G} strokeWidth="1.100" /></Svg>
      </div>
      <div className="mt-[10px] flex h-4 shrink-0 items-center pl-[11px]">
        <Svg w={7} h={5}><path d="M0 0 H7 L3.500 5 Z" fill="#5b5868" /></Svg>
        <Fit w={49} className="ml-[5px]">Diagrams</Fit>
      </div>
      <div className="mt-[15px] flex h-4 shrink-0 items-center pl-[29px]">
        <Tree c={D} />
        <Fit w={72} className="ml-[12px]">Main Diagram</Fit>
      </div>
      <div className="mt-[20px] flex h-4 shrink-0 items-center pl-[23px]"><Fit w={70}>Subject Areas</Fit></div>
      <div className="mt-auto flex h-[33px] shrink-0 items-center border-t border-[#2d2b36] pl-[167px]">
        <Svg w={14} h={13}><rect x="0.500" y="0.500" width="13" height="12" rx="1" stroke="#b0aeb9" strokeWidth="1.200" /><path d="M7.500 3 H11 V6 H7.500 Z M3 7.500 H6.500 V10.500 H3 Z" stroke="#b0aeb9" /></Svg>
        <div className="ml-[16px]"><Tree c={D} /></div>
        <Svg w={13} h={14} className="ml-[15px]"><path d="M0 2.500 H13 M4.500 2.500 V0.500 H8.500 V2.500 M1.500 2.500 V13.500 H11.500 V2.500 M5 5 V11 M8 5 V11" stroke={D} strokeWidth="1.100" /></Svg>
      </div>
    </div>
  );
}

/* ---------- diagram ---------- */

type Row = [string, string, string?, string?];
type Table = { title?: string; x: number; y: number; w: number; name: number; type?: number; nul?: boolean; head: Row; rows: Row[] };

const CH = 6.4;
const ID: Row = ["id", "bigint AI", "PK"];
const NONE: Row = ["", ""];

/* Coordinates are those of the whole screen; the canvas subtracts its own origin. */
const OX = 388;
const OY = 265;

const tables: Table[] = [
  {
    x: 250, y: 232, w: 264, name: 14.5, type: 12, nul: true, head: NONE,
    rows: [
      ["", "varchar(145)", "", "NULL"], ["", "varchar(14)", "", "NULL"], ["", "varchar(145)", "", "NULL"],
      ["", "timestamp", "", "NULL"], ["", "varchar(15)", "", "NULL"], ["", "datetime", "", "NULL"],
      ["", "tinyint", "", "NULL"], NONE, ["", "timestamp"], ["", "timestamp"],
    ],
  },
  {
    title: "seller", x: 538, y: 330, w: 222, name: 15, head: ID,
    rows: [["user_id", "bigint", "FK"], ["primary_account", "bigint", "FK"]],
  },
  {
    title: "documents", x: 540, y: 458, w: 190, name: 10, head: ID,
    rows: [["name", "text"], ["type", "text"], ["file_url_1", "text"], ["file_url_2", "text"]],
  },
  {
    x: 250, y: 608, w: 252, name: 12.64, type: 12, nul: true, head: ["", "bigint AI", "PK"],
    rows: [["", "", "", "NULL"], NONE, ["", "varchar(45)"], ["", "varchar(25)"], ["", "varchar(145)"]],
  },
  { x: 270, y: 822, w: 214, name: 13.7, head: ["", "bigint AI", "PK"], rows: [["", "bigint", "FK"], ["", "bigint", "FK"]] },
  {
    title: "round", x: 661, y: 696, w: 190, name: 10, head: ID,
    rows: [["auction_id", "bigint", "FK"], ["starts_at", "datetime"], ["ends_at", "datetime"], ["base_price", "integer"], ["h1_id", "bigint", "FK"]],
  },
  {
    title: "user_documents", x: 623, y: 891, w: 197, name: 11, head: ID,
    rows: [["user_id", "bigint", "FK"], ["document_id", "bigint", "FK"]],
  },
  {
    title: "bid", x: 896, y: 535, w: 190, name: 10, head: ID,
    rows: [["bidder_id", "bigint", "FK"], ["auction_id", "bigint", "FK"], ["price", "integer"], ["placed_at", "datetime"]],
  },
  {
    title: "round_bids", x: 1009, y: 713, w: 178, name: 8, head: ID,
    rows: [["bid_id", "bigint", "FK"], ["round_id", "bigint", "FK"]],
  },
  {
    title: "bidder_auction", x: 1076, y: 930, w: 190, name: 10, head: ID,
    rows: [["bidder_id", "bigint", "FK"], ["auction_id", "bigint", "FK"], ["emd_id", "bigint", "FK"]],
  },
  {
    title: "item", x: 1280, y: 668, w: 203, name: 11, type: 10, head: ["id", "integer AI", "PK"],
    rows: [["name", "text"], ["description", "text"], ["image_url", "text"], ["item_id", "bigint", "FK"]],
  },
  {
    x: 1041, y: 230, w: 299, name: 27, head: NONE,
    rows: [
      ["name", "text"], ["description", "text"], ["starts_at", "datetime"], ["ends_at", "datetime"], ["no_of_round", "integer"],
      ["base_price", "integer"], ["create_at", "timestamp"], ["updated_at", "timestamp"], ["registration_time_starts_at", "datetime"],
      ["registration_time_ends_at", "datetime"], ["auction_item_id", "bigint", "FK"], ["emd_amount", "integer"],
      ["h1_payment_end_date", "datetime"], ["h1_payment_perc", "float"],
    ],
  },
  {
    x: 1410, y: 237, w: 222, name: 15, head: NONE,
    rows: [["auction_id", "bigint", "FK"], ["quantity", "integer"], ["processing_fees", "float"], ["total_amount", "float"], ["status", "tinyint"], ["id_1", "bigint", "FK"]],
  },
  {
    title: "auction_documents", x: 1507, y: 470, w: 197, name: 11, head: ["id", "bigint"],
    rows: [["auction_id", "bigint"], ["document_id", "bigint"]].map(([a, b], i) => [a, b, i > 1 ? "" : "FK"] as Row),
  },
  {
    title: "auction_item", x: 1518, y: 560, w: 197, name: 11, head: ["id", "bigint"],
    rows: [["name", "text"], ["descri[tion", "text"], ["quantity", "integer"], ["auction_id", "bigint", "FK"]],
  },
];

function typeColor(t: string) {
  if (/^(date|time)/.test(t)) return "text-[#0fbbe0]";
  if (/^(text|varchar)/.test(t)) return "text-[#ee7510]";
  return "text-[#b7ba0d]";
}

function TableRow({ row, t }: { row: Row; t: Table }) {
  const [name, type, key, nul] = row;
  const color = key === "FK" ? "text-[#6852f4]" : "text-[#cdccd3]";
  const typeW = (t.type ?? 9) * CH;
  return (
    <div className="flex h-[14px] items-center pl-[8px] leading-[14px]">
      <span className={`shrink-0 ${color}`} style={{ width: t.name * CH + 8.4 }}>{name}</span>
      <span className={`shrink-0 ${typeColor(type)}`} style={{ width: t.nul ? typeW + 8 : typeW + 16 }}>{type}</span>
      {t.nul && <span className="w-[33.600px] shrink-0 text-[#cdccd3]">{nul}</span>}
      <span className={color}>{key}</span>
    </div>
  );
}

function TableNode({ t }: { t: Table }) {
  return (
    <div className="absolute" style={{ left: t.x - OX, top: t.y - OY, width: t.w }}>
      {t.title && <div className="absolute -top-[18px] left-[2px] whitespace-nowrap text-[11.800px] leading-4 text-[#cdccd3]">{t.title}</div>}
      <div className="border-2 border-[#5a576a] bg-[#25242d] text-[10.667px]">
        <div className="mx-1 mb-[5px] h-6 border-b border-[#5a576a] pt-[4px]"><div className="-mx-1"><TableRow row={t.head} t={t} /></div></div>
        {t.rows.map((r, i) => <TableRow key={i} row={r} t={t} />)}
        <div className="h-1" />
      </div>
    </div>
  );
}

const links = [
  "M614 260 V306", "M648 260 V867", "M1410 296 H686 V672", "M760 334 H1038", "M563 398 V612 H502", "M502 612 H821 V260", "M830 260 V672",
  "M839 260 V550 H893", "M730 462 H1504", "M635 551 V867", "M1101 463 V906", "M1101 464.5 V906", "M1182 463 V557 H1089", "M1191 463 V906",
  "M1209 463 V596 H1515", "M991 628 V728 H1006", "M851 700 H1006", "M1410 343 H1343", "M1340 334 H1410", "M1340 325 H1407",
  "M1532 358 V446", "M1617 358 V540", "M1518 605 H1382 V644",
];
const ends: [number, number][] = [
  [614, 306], [563, 398], [686, 672], [830, 672], [893, 550], [1089, 557], [1038, 334], [1343, 343], [1407, 325], [1504, 462], [1532, 446],
  [1515, 596], [1382, 644], [1006, 700], [1006, 728], [635, 867], [648, 867], [1101, 906], [1191, 906],
];

const miniRects = [
  [1523, 933, 16.5, 15.7], [1551, 934, 14.7, 5.5], [1571, 935.3, 18.5, 16.7], [1593, 936.7, 14, 8.7], [1541, 941.7, 13.5, 5.3], [1541, 949.7, 11.8, 7.3],
  [1562, 954.3, 11.8, 7.3], [1599, 950.7, 12, 5.5], [1600, 956, 11.8, 7], [1523, 959, 16, 8], [1548, 963.7, 11.8, 8.3], [1569, 965, 11, 5.5],
  [1585, 962, 12.6, 7.3], [1524, 971.7, 14, 5.3], [1546, 975.7, 12, 5.3], [1573, 978, 11.8, 6.7], [1522, 982, 22, 12],
];

function Canvas() {
  return (
    <div className="relative min-h-0 flex-1 overflow-hidden font-['Liberation_Mono',monospace]">
      <svg className="absolute inset-0 h-full w-full" viewBox={`${OX} ${OY} 1231 766`} fill="none">
        {links.map((d) => <path key={d} d={d} stroke="#9a98a6" strokeOpacity="0.55" strokeWidth="2" strokeDasharray="3 3" />)}
        {ends.map(([x, y], i) => <circle key={i} cx={x} cy={y} r="3.200" fill="#9a98a6" />)}
      </svg>
      {tables.map((t, i) => <TableNode key={i} t={t} />)}
      <div className="absolute left-[-100px] top-[730px] h-16 w-[301px] border-2 border-[#5a576a] bg-[#25242d] text-[10.667px] leading-[14px]">
        <div className="mx-1 h-6 border-b border-[#5a576a] pl-[260px] pt-[4px] text-[#cdccd3]">PK</div>
        <div className="mt-[5px] whitespace-pre pl-[98px] text-[#ee7510]">{"k, 'officer','Resident')"}</div>
      </div>
      <div className={`absolute left-[14px] top-[748px] text-[11px] leading-4 text-[#62606f] ${UI}`}><Fit w={73}>100%   MySQL</Fit></div>
      <div className="absolute left-4 top-0 flex h-[25px] w-6 items-center justify-center rounded-b-[2px] bg-[#3d3b4e]/80"><div className="h-px w-2 bg-[#8d8b97]" /></div>
      <div className="absolute bottom-0 right-0 h-[101px] w-[100px] bg-[#25242d]">
        <svg width="100" height="101" viewBox="1519 930 100 101" fill="none">
          {miniRects.map(([x, y, w, h], i) => <rect key={i} x={x} y={y} width={w} height={h} fill="#575467" />)}
          <rect x="1532.500" y="937.500" width="73" height="48" stroke="#8d8b97" />
          <path d="M1607 1016 L1616.500 1026 M1608 1026.200 H1616.700 V1017" stroke="#a3a1ac" strokeWidth="1.100" />
        </svg>
      </div>
      <div className="absolute bottom-[7px] right-[110px] flex items-center">
        <div className="mt-px h-[3px] w-[3px] rounded-full bg-[#00e285]" />
        <Svg w={16} h={14} className="ml-[14px]"><path d="M8 0.700 L15.200 5 L8 9.500 L0.800 5 Z M3 7 V12.500 Q8 14.500 13 12.500 V7" stroke="#a3a1ac" strokeWidth="1.100" /></Svg>
        <div className={`ml-[12px] flex h-4 w-4 items-center justify-center rounded-full border border-[#a3a1ac] text-[9px] leading-none text-[#a3a1ac] ${UI}`}>?</div>
      </div>
    </div>
  );
}

function Center() {
  return (
    <div className={`flex min-w-0 flex-1 flex-col text-[11px] ${UI}`}>
      <div className="flex h-[31px] shrink-0 items-center border-b border-[#2d2b36]">
        <div className="flex h-full w-[653px] items-center border-r border-[#33313d] bg-[#25242d] pl-[5px]">
          <div className="flex h-[24px] w-[157px] items-center justify-between border border-[#3d3b50] bg-[#1e1c26] px-[7px] text-[#c2c1c9]">
            <Fit w={44}>-- Root --</Fit>
            <Caret c="#08070b" w={7} />
          </div>
          <Fit w={72} className="ml-[210px] text-[#c2c1c9]">Main Diagram</Fit>
        </div>
        <div className="ml-auto flex items-center pr-[12px]">
          <Svg w={11} h={11}><path d="M5.500 0 V11 M0 5.500 H11" stroke={G} strokeWidth="1.200" /></Svg>
          <Svg w={5} h={8} className="ml-[21px]"><path d="M4.500 0.500 L1 4 L4.500 7.500" stroke={G} strokeWidth="1.200" /></Svg>
          <Svg w={5} h={8} className="ml-[27px]"><path d="M0.500 0.500 L4 4 L0.500 7.500" stroke={G} strokeWidth="1.200" /></Svg>
        </div>
      </div>
      <div className="flex h-10 shrink-0 items-center bg-[#3a366d] pl-[468px] pr-[23px] pt-[2px] text-[11.500px] text-[#5d4be0]">
        <Svg w={16} h={16} className="-mt-[2px]"><circle cx="8" cy="8" r="7.300" stroke="#6551ea" strokeWidth="1.100" /><path d="M8 6.800 V12 M8 4 V5.300" stroke="#6551ea" strokeWidth="1.100" /></Svg>
        <Fit w={138} className="-mt-px ml-[12px]">You have unsaved changes</Fit>
        <div className="ml-[3px] flex h-6 w-[102px] items-center justify-center rounded-[1px] bg-[#5e00ff] text-[#d9ccff]"><Fit w={54}>Load Draft</Fit></div>
        <Svg w={8} h={8} className="-mt-[3px] ml-auto"><path d="M0.500 0.500 L7.500 7.500 M7.500 0.500 L0.500 7.500" stroke="#5d4be0" /></Svg>
      </div>
      <Canvas />
    </div>
  );
}

/* ---------- right panel ---------- */

function Properties() {
  return (
    <div className={`flex w-[301px] shrink-0 flex-col border-l border-[#2d2b36] text-[11.500px] text-[#c2c1c9] ${UI}`}>
      <div className="flex h-8 shrink-0 items-center border-b border-[#2d2b36] bg-[#25242d] pl-[10px] pr-[13px]">
        <Fit w={118} className="mt-[2px] text-[11px] font-semibold">DIAGRAM PROPERTIES</Fit>
        <Svg w={8} h={8} className="ml-auto"><path d="M0.500 0.500 L3.700 4 L0.500 7.500 M4 0.500 L7.200 4 L4 7.500" stroke={G} /></Svg>
      </div>
      <div className="flex h-[33px] shrink-0 items-center bg-[#25242d] px-[13px]">
        <Fit w={44}>Diagram</Fit>
        <Svg w={7} h={5} className="ml-auto"><path d="M0.500 0.500 L3.500 4 L6.500 0.500" stroke={G} strokeWidth="1.200" /></Svg>
      </div>
      <div className="flex h-[134px] shrink-0 flex-col pl-[13px] pr-3">
        <Fit w={61} className="mt-[13px] self-start leading-4 text-[#93919d]">SubjectArea</Fit>
        <div className="mt-[6px] flex h-[26px] items-center justify-between border border-[#3d3b50] px-[7px]"><Fit w={44}>-- Root --</Fit><Caret c="#08070b" w={7} /></div>
        <Fit w={43} className="mt-[12px] self-start leading-4 text-[#93919d]">Diagram</Fit>
        <div className="mt-[6px] flex h-[26px] items-center border border-[#3d3b50] pl-[7px]"><Fit w={72}>Main Diagram</Fit></div>
      </div>
      {([["View Mode Options", 100], ["Global User Preferences", 124], ["Description", 59]] as [string, number][]).map(([l, w]) => (
        <div key={l} className="flex h-[33px] shrink-0 items-center border-b border-[#302e3a] bg-[#25242d] px-[13px] text-[#545161]">
          <Fit w={w}>{l}</Fit>
          <Svg w={5} h={7} className="ml-auto"><path d="M0.500 0.500 L4 3.500 L0.500 6.500" stroke={G} strokeWidth="1.200" /></Svg>
        </div>
      ))}
    </div>
  );
}

const replies: [string, number][] = [
  ["Yes, I'd like to learn more", 153],
  ["I want to upgrade my current subscription", 254],
  ["Question about educational license", 216],
  ["Never mind, just browsing", 159],
];

function Chat() {
  return (
    <div className="absolute right-5 top-[705px] flex w-[335px] flex-col items-end gap-[10px] font-['Lato','Open_Sans',sans-serif]">
      <div className="mb-2 flex w-full items-end">
        <div className="flex h-8 w-8 flex-col items-center rounded-full bg-[#5e00ff]">
          <Svg w={18} h={14} className="mt-[5px]"><rect x="7" width="11" height="14" rx="4" fill="#4600ce" /><path d="M4 3.500 H11 M7 7 H13 M4 10.500 H13" stroke="#c4b4ff" strokeWidth="1.400" /></Svg>
          <Fit w={23} className="font-['Inter'] text-[6px] font-bold leading-[9px] text-white">SqlDBM</Fit>
        </div>
        <Svg w={9} h={14} className="ml-[3px]"><path d="M9 0 L1 14 H9 Z" fill="#fff" /></Svg>
        <div className="-ml-[4px] flex h-[86px] flex-1 flex-col rounded bg-white pl-5 text-[13px]">
          <Fit w={149} className="mt-[14px] self-start leading-[18px] text-[#737376]"><b>SqlDBM Bot</b> from SqlDBM</Fit>
          <Fit w={167} className="mt-[9px] self-start text-[13.500px] leading-[18px] text-[#1c1c1c]">Questions about our plans?</Fit>
        </div>
      </div>
      {replies.map(([r, w]) => (
        <div key={r} className="flex h-[38px] items-center rounded bg-[#e6eafe] px-[10px] pb-[2px] text-[13.500px] text-[#4318a8]"><Fit w={w}>{r}</Fit></div>
      ))}
    </div>
  );
}

/* ---------- downloads ---------- */

const downloads: { icon: React.ReactNode; label: string; lw: number }[] = [
  { icon: <Svg w={15} h={16}><rect width="15" height="16" rx="1" fill="#c4121b" /><path d="M3 2 H10 L14 6 V14 H9 L4 9 Z" fill="#f6dedd" /><path d="M2 14 L8 1 L9 15 M3 8 L12 12" stroke="#c4121b" strokeWidth="1.500" /></Svg>, label: "Job Descripti….pdf", lw: 138 },
  { icon: <Svg w={14} h={16}><path d="M0.500 0.500 H9 L13.500 5 V15.500 H0.500 Z" fill="#efefef" stroke="#cfcfcf" /><path d="M3 3 V6 M3 8 H6 M3 10 H6 M8 10 H11 M3 12.500 H11" stroke="#aaa" /></Svg>, label: "gitignore", lw: 65 },
  { icon: <Svg w={17} h={15}><path d="M2 0 H15 L17 4 H0 Z" fill="#d0bd84" /><rect y="3.500" width="17" height="11.500" rx="1" fill="#ac9a62" /><rect x="6" width="5" height="6" fill="#dccb98" /></Svg>, label: "keyless-entry….zip", lw: 138 },
];

function Downloads() {
  return (
    <div className={`flex h-[49px] shrink-0 items-center border-t border-[#a9a9ad] bg-white text-[#45474b] ${SYS}`}>
      {downloads.map((d) => (
        <div key={d.label} className="flex h-9 w-[227px] items-center border-r border-[#cfd0d2] pl-[15px] pr-[18px] first:w-[231px] first:pl-[18px]">
          <div className="flex w-[18px] justify-center pb-1">{d.icon}</div>
          <Fit w={d.lw} className="ml-[12px] mt-[2px] text-[15.500px]">{d.label}</Fit>
          <Svg w={10} h={6} className="ml-auto"><path d="M0.800 5.500 L5 1 L9.200 5.500" stroke="#6d6f73" strokeWidth="1.600" /></Svg>
        </div>
      ))}
      <div className="ml-auto flex h-8 w-[89px] items-center justify-center rounded border border-[#d9dadd] text-[14.500px] font-semibold"><Fit w={57}>Show all</Fit></div>
      <Svg w={11} h={11} className="ml-[13px] mr-[12px]"><path d="M1 1 L10 10 M10 1 L1 10" stroke="#6d6f73" strokeWidth="1.800" /></Svg>
    </div>
  );
}

export default function App() {
  return (
    <div className="relative flex h-[1080px] w-[1920px] flex-col overflow-hidden bg-[#1e1c26]">
      <TopBar />
      <div className="flex min-h-0 flex-1">
        <Dock />
        <div className="flex min-w-0 flex-1 flex-col">
          <TabStrip />
          <Toolbar />
          <Bookmarks />
          <AppHeader />
          <div className="flex min-h-0 flex-1">
            <Rail />
            <DiagramsPanel />
            <Center />
            <Properties />
          </div>
          <Downloads />
        </div>
      </div>
      <Notification />
      <Chat />
    </div>
  );
}
